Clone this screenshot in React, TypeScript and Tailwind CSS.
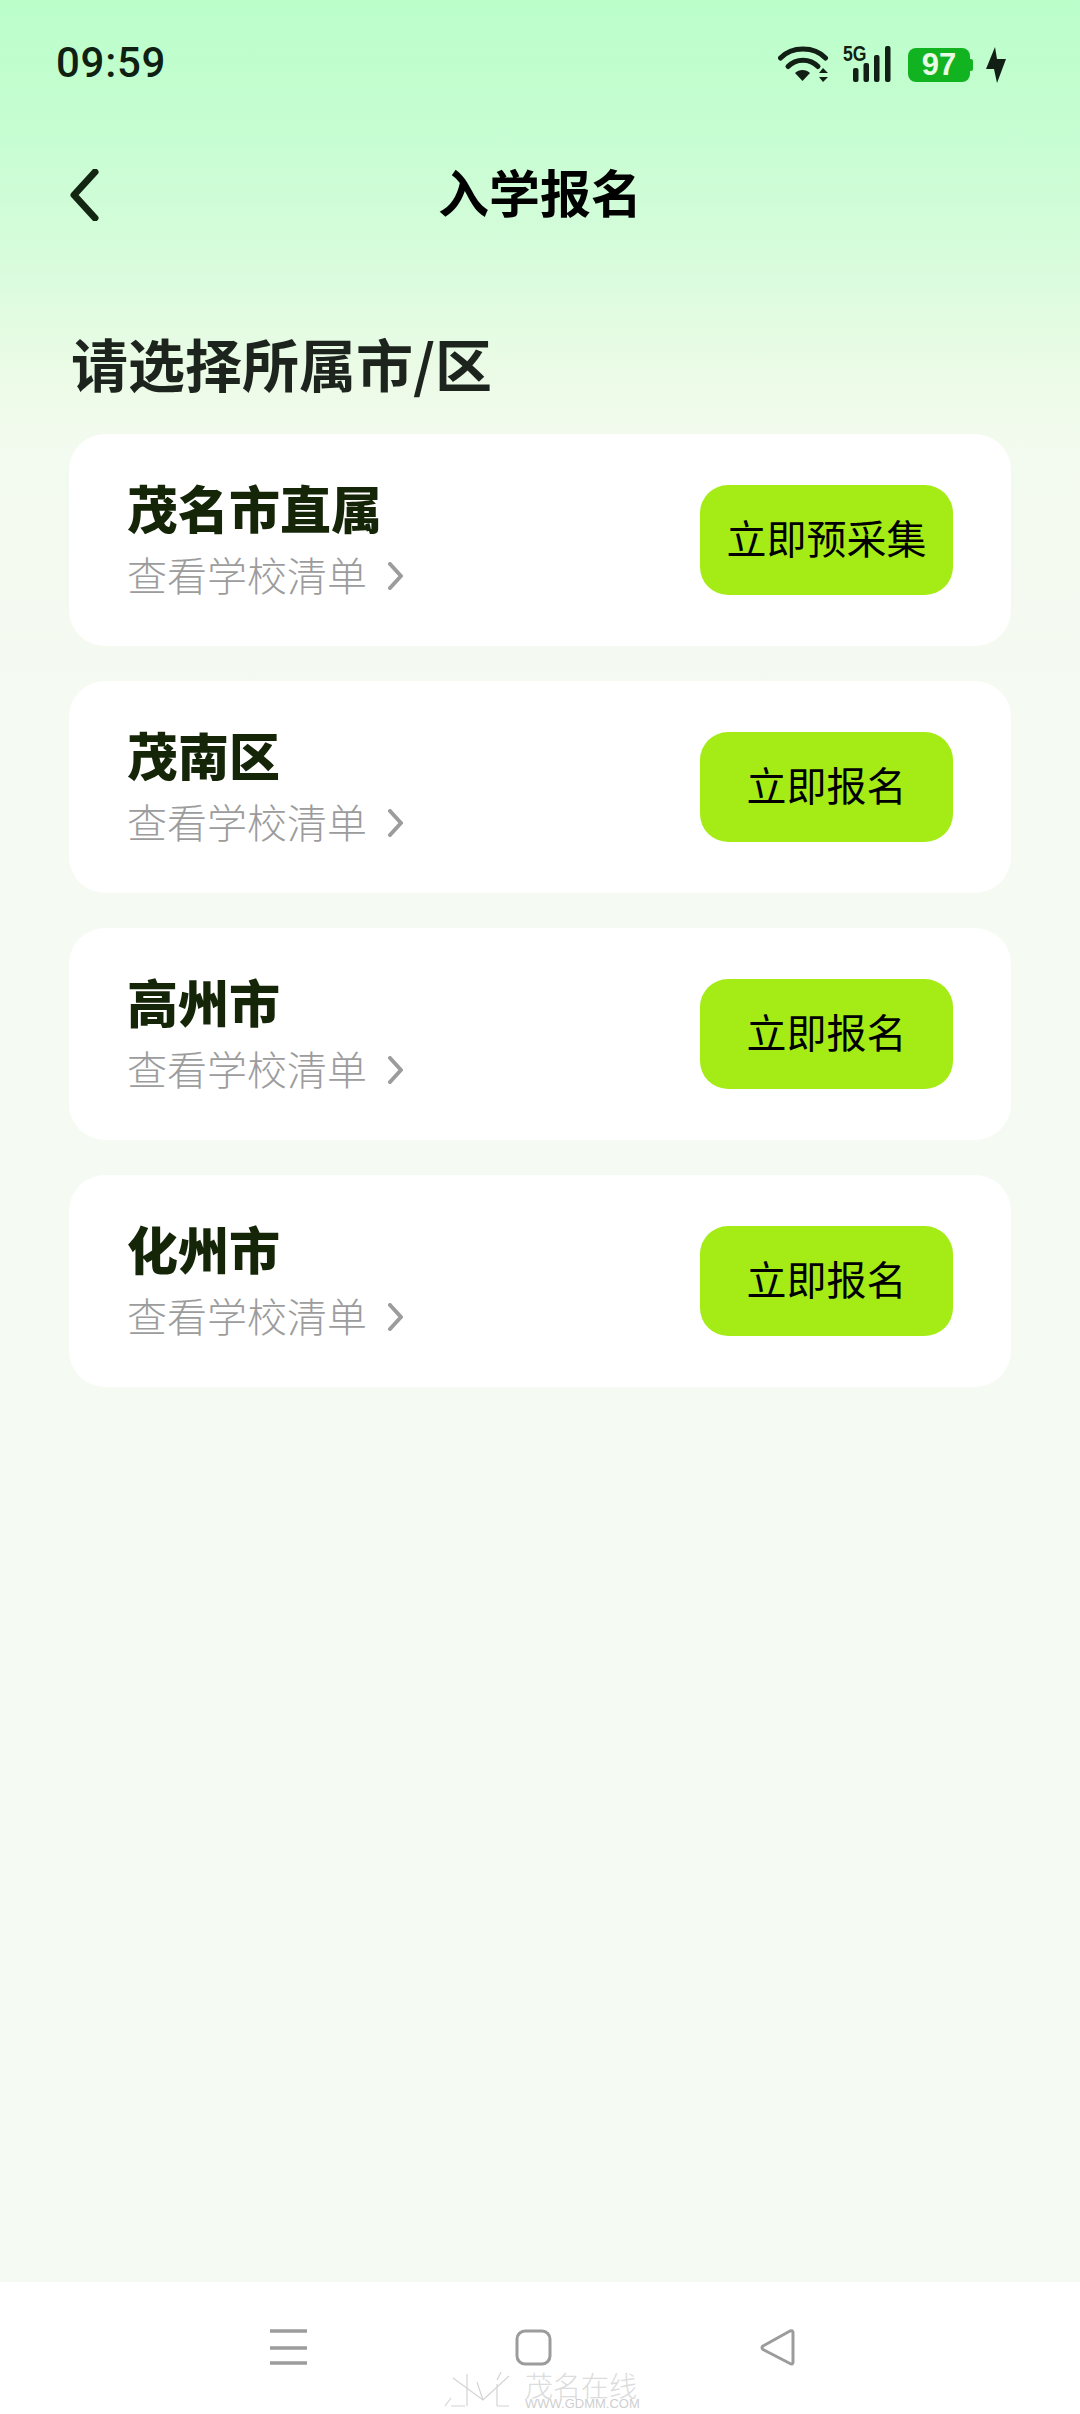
export default function App() {
  const rows = [
    { name: "茂名市直属", action: "立即预采集" },
    { name: "茂南区", action: "立即报名" },
    { name: "高州市", action: "立即报名" },
    { name: "化州市", action: "立即报名" },
  ];
  const font = { fontFamily: '"Noto Sans CJK SC", "Noto Sans", sans-serif' };
  return (
    <div style={font} className="relative flex h-[2414px] w-[1080px] flex-col overflow-hidden bg-[linear-gradient(180deg,#bbfeca_0px,#c6fdd1_130px,#d6fcdb_250px,#ebfbe6_370px,#f3faef_450px,#f5faf2_700px,#f5faf2_2282px)]">
      <div className="flex h-[84px] items-start justify-between pl-[56px] pr-[74px] pt-[46px]">
        <span className="font-['Roboto',sans-serif] text-[42px] font-medium leading-[34px] tracking-[0.7px] text-[#0f1f12]">09:59</span>
        <div className="flex items-start">
          <svg width="52" height="38" viewBox="0 0 52 38" fill="none">
            <path d="M2.5 12 C14 0 36 0 47.5 12" stroke="#111f14" strokeWidth="5" strokeLinecap="round" />
            <path d="M10 20.5 C18 12 32 12 40 20.5" stroke="#111f14" strokeWidth="5" strokeLinecap="round" />
            <path d="M17 27 L24.5 35 L32 27 C28 23 21 23 17 27Z" fill="#111f14" />
            <path d="M41 27 L45 22 L50 27Z M41 31 L50 31 L45 36Z" fill="#111f14" />
          </svg>
          <div className="relative ml-[15px] h-[38px] w-[48px]">
            <span className="absolute left-[-2px] top-[-3px] origin-left scale-x-80 font-['Liberation_Sans',sans-serif] text-[22px] font-bold leading-[22px] text-[#111f14]">5G</span>
            <svg width="48" height="38" viewBox="0 0 48 38" className="absolute left-0 top-0">
              <rect x="8" y="22" width="5.5" height="14" rx="2" fill="#111f14" />
              <rect x="18.5" y="17" width="5.5" height="19" rx="2" fill="#111f14" />
              <rect x="29" y="9" width="5.5" height="27" rx="2" fill="#111f14" />
              <rect x="40" y="0" width="5.5" height="36" rx="2" fill="#111f14" />
            </svg>
          </div>
          <div className="ml-[15px] mt-[2px] flex h-[34px] w-[65px] items-center">
            <div className="flex h-[34px] w-[62px] items-center justify-center rounded-[8px] bg-[#12b320] font-['Liberation_Sans',sans-serif] text-[31px] font-bold text-[#e8fbe4]">97</div>
            <div className="h-[12px] w-[3px] rounded-r-[2px] bg-[#12b320]" />
          </div>
          <svg width="20" height="38" viewBox="0 0 20 38" className="ml-[13px]">
            <path d="M9 1 L0 23 L8 23 L11 37 L20 13 L11 13 Z" fill="#111f14" />
          </svg>
        </div>
      </div>

      <div className="mt-[86px] flex h-[50px] items-center pl-[69px]">
        <svg width="30" height="52" viewBox="0 0 30 52" fill="none" className="shrink-0">
          <path d="M26 3 L5 26 L26 49" stroke="#122612" strokeWidth="7" strokeLinecap="round" strokeLinejoin="round" />
        </svg>
        <h1 className="ml-[339px] -translate-y-[4px] text-[51px] font-bold leading-[50px] text-black">入学报名</h1>
      </div>

      <h2 className="ml-[71px] mt-[114px] text-[57px] font-bold leading-[56px] text-[#1c241d]">请选择所属市/区</h2>

      <div className="mx-[69px] mt-[44px] flex flex-col gap-[35px]">
        {rows.map((r) => (
          <div key={r.name} className="flex h-[212px] items-center justify-between rounded-[36px] bg-white pl-[58px] pr-[58px]">
            <div className="flex flex-col">
              <div className="-mt-[4px] text-[51px] font-black leading-[58px] text-[#152508]">{r.name}</div>
              <div className="mt-[13px] flex items-center text-[40px] font-light leading-[50px] text-[#9c9c9c]">
                查看学校清单
                <svg width="18" height="28" viewBox="0 0 18 28" fill="none" className="ml-[20px] mt-[4px]">
                  <path d="M3 2 L14 14 L3 26" stroke="#9c9c9c" strokeWidth="4" strokeLinecap="round" strokeLinejoin="round" />
                </svg>
              </div>
            </div>
            <button className="flex h-[110px] w-[253px] items-center justify-center rounded-[28px] bg-[#a5ec17] pb-[6px] text-[40px] font-normal text-black">{r.action}</button>
          </div>
        ))}
      </div>

      <div className="relative mt-auto flex h-[132px] items-start justify-between bg-white pl-[270px] pr-[284px] pt-[47px]">
        <svg width="38" height="36" viewBox="0 0 38 36" fill="none">
          <path d="M0 2 H37 M0 19 H37 M0 34 H37" stroke="#9c9c9c" strokeWidth="3.5" />
        </svg>
        <svg width="38" height="37" viewBox="0 0 38 37" fill="none">
          <rect x="2" y="2" width="33" height="33" rx="8" stroke="#9c9c9c" strokeWidth="3" />
        </svg>
        <svg width="36" height="37" viewBox="0 0 36 37" fill="none">
          <path d="M33 3.5 V33 Q33 36 30 34.5 L3 20.5 Q1 18.5 3 17 L30 2 Q33 1 33 3.5 Z" stroke="#9c9c9c" strokeWidth="3" strokeLinejoin="round" />
        </svg>
        <div className="absolute left-[443px] top-[90px] flex h-[36px] items-start">
          <svg width="68" height="36" viewBox="0 0 68 36" fill="none" stroke="#d4d4d4" strokeWidth="1.2">
            <path d="M10 6 L40 28 L66 4 M24 2 V34 M8 34 H22 M40 28 L34 10 M54 12 V34 M54 34 H66 M2 34 L8 26 M58 0 L54 8" />
          </svg>
          <div className="ml-[14px] flex flex-col items-start">
            <span className="text-[28px] font-light leading-[26px] text-[#dcdcdc]">茂名在线</span>
            <span className="font-['Liberation_Sans',sans-serif] text-[13px] leading-[12px] text-[#cfcfcf]">WWW.GDMM.COM</span>
          </div>
        </div>
      </div>
    </div>
  );
}
